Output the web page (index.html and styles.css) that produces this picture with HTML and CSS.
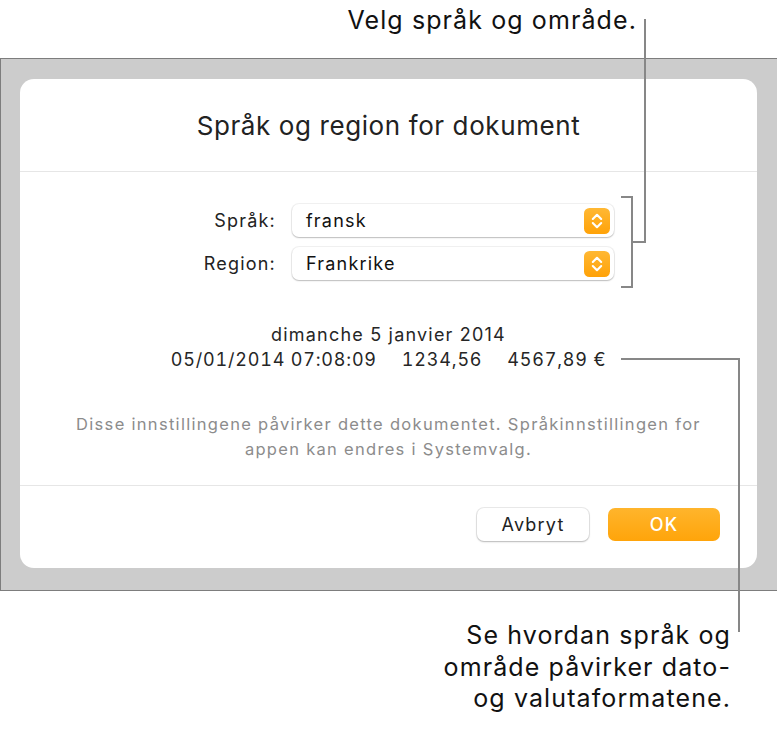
FILE: index.html
```html
<!DOCTYPE html>
<html lang="no">
<head>
<meta charset="utf-8">
<title>Språk og region for dokument</title>
<link rel="stylesheet" href="styles.css">
</head>
<body>
<div class="page">
  <div class="callout-top">Velg språk og område.</div>
  <div class="frame">
    <div class="dialog">
      <div class="dlg-title">Språk og region for dokument</div>
      <div class="form">
        <div class="label">Språk:</div>
        <div class="popup"><span>fransk</span>
          <svg class="stepper" width="26" height="26" viewBox="0 0 26 26"><defs><linearGradient id="g1" x1="0" y1="0" x2="0" y2="1"><stop offset="0" stop-color="#ffb834"/><stop offset="1" stop-color="#ffa208"/></linearGradient></defs><rect x="0" y="0" width="26" height="26" rx="5.5" fill="url(#g1)"/><path d="M8.8 11 L13 6.8 L17.2 11 M8.8 15 L13 19.2 L17.2 15" fill="none" stroke="#fff" stroke-width="2.1" stroke-linecap="round" stroke-linejoin="round"/></svg>
        </div>
        <div class="label">Region:</div>
        <div class="popup"><span>Frankrike</span>
          <svg class="stepper" width="26" height="26" viewBox="0 0 26 26"><defs><linearGradient id="g2" x1="0" y1="0" x2="0" y2="1"><stop offset="0" stop-color="#ffb834"/><stop offset="1" stop-color="#ffa208"/></linearGradient></defs><rect x="0" y="0" width="26" height="26" rx="5.5" fill="url(#g2)"/><path d="M8.8 11 L13 6.8 L17.2 11 M8.8 15 L13 19.2 L17.2 15" fill="none" stroke="#fff" stroke-width="2.1" stroke-linecap="round" stroke-linejoin="round"/></svg>
        </div>
      </div>
      <div class="sample">
        <div class="sample-line">dimanche 5 janvier 2014</div>
        <div class="sample-line nums"><span class="fmt">05/01/2014 07:08:09</span><span class="fmt">1234,56</span><span class="fmt">4567,89 €</span></div>
      </div>
      <p class="note">Disse innstillingene påvirker dette dokumentet. Språkinnstillingen for<br>appen kan endres i Systemvalg.</p>
      <div class="footer">
        <button class="btn btn-cancel" type="button">Avbryt</button>
        <button class="btn btn-ok" type="button">OK</button>
      </div>
    </div>
  </div>
  <div class="callout-bottom">Se hvordan språk og<br>område påvirker dato-<br>og valutaformatene.</div>

  <div class="bracket"></div>
  <div class="leader-top"></div>
  <div class="leader-bottom"></div>
</div>
</body>
</html>
```
FILE: styles.css
```css
html, body {
  margin: 0;
  padding: 0;
  background: #ffffff;
}

.page {
  position: relative;
  width: 777px;
  height: 732px;
  overflow: hidden;
  font-family: Inter, "Noto Sans", "Liberation Sans", sans-serif;
  color: #1d1d1d;
}

.callout-top {
  height: 58px;
  box-sizing: border-box;
  padding: 5px 140px 0 0;
  text-align: right;
  font-size: 25px;
  letter-spacing: 1.1px;
  line-height: 30px;
  color: #111;
}

.frame {
  width: 778px;
  box-sizing: border-box;
  border: 1px solid #7d7d7d;
  background: #cccccc;
  padding: 20px 20px 22px 19px;
}

.dialog {
  width: 737px;
  height: 489px;
  background: #ffffff;
  border-radius: 14px;
  display: flex;
  flex-direction: column;
}

.dlg-title {
  height: 93px;
  display: flex;
  align-items: center;
  justify-content: center;
  font-size: 26px;
  letter-spacing: 0.6px;
  color: #222;
  border-bottom: 1px solid #e6e6e6;
  padding-top: 1px;
  box-sizing: border-box;
}

.form {
  display: grid;
  grid-template-columns: 256px 322px;
  grid-auto-rows: 33px;
  column-gap: 16px;
  row-gap: 10px;
  padding-top: 32px;
  align-items: center;
}

.label {
  text-align: right;
  font-size: 18px;
  letter-spacing: 1.2px;
  color: #222;
}

.popup {
  height: 33px;
  box-sizing: border-box;
  background: #fff;
  border-radius: 7px;
  box-shadow: 0 0 0 1px rgba(0, 0, 0, 0.055), 0 1px 1.5px rgba(0, 0, 0, 0.22);
  display: flex;
  align-items: center;
  justify-content: space-between;
  padding: 0 4px 0 14px;
  font-size: 18px;
  letter-spacing: 1.2px;
  color: #111;
}

.stepper {
  display: block;
}

.sample {
  margin-top: 43px;
  text-align: center;
  font-size: 18px;
  letter-spacing: 1.2px;
  line-height: 24px;
  color: #262626;
}

.nums {
  font-feature-settings: "tnum" 1;
  letter-spacing: 0.8px;
  margin-top: 1px;
}

.fmt + .fmt {
  margin-left: 25px;
}

.note {
  margin: 40px 0 0;
  text-align: center;
  font-size: 16.5px;
  letter-spacing: 1.3px;
  line-height: 25px;
  color: #8c8c8c;
}

.footer {
  margin-top: auto;
  height: 83px;
  box-sizing: border-box;
  border-top: 1px solid #e6e6e6;
  display: flex;
  justify-content: flex-end;
  align-items: flex-start;
  gap: 19px;
  padding: 22px 37px 0 0;
}

.btn {
  width: 112px;
  height: 33px;
  border-radius: 7px;
  font-family: inherit;
  font-size: 18px;
  letter-spacing: 1.2px;
  cursor: default;
  padding: 0;
}

.btn-cancel {
  background: #fff;
  color: #222;
  border: none;
  box-shadow: 0 0 0 1px rgba(0, 0, 0, 0.08), 0 1px 2px rgba(0, 0, 0, 0.22);
}

.btn-ok {
  background: linear-gradient(#ffb52c, #ffa40a);
  color: #fff;
  border: none;
  font-weight: 500;
}

.callout-bottom {
  margin-top: 29px;
  padding-right: 46px;
  text-align: right;
  font-size: 25px;
  letter-spacing: 1.1px;
  line-height: 31.5px;
  color: #111;
}

.bracket {
  position: absolute;
  left: 621px;
  top: 196px;
  width: 12px;
  height: 92px;
  box-sizing: border-box;
  border: 2px solid #878787;
  border-left: none;
}

.leader-top {
  position: absolute;
  left: 632px;
  top: 19px;
  width: 14px;
  height: 224px;
  box-sizing: border-box;
  border-right: 2px solid #878787;
  border-bottom: 2px solid #878787;
}

.leader-bottom {
  position: absolute;
  left: 621px;
  top: 358px;
  width: 119px;
  height: 274px;
  box-sizing: border-box;
  border-top: 2px solid #878787;
  border-right: 2px solid #878787;
}
```
